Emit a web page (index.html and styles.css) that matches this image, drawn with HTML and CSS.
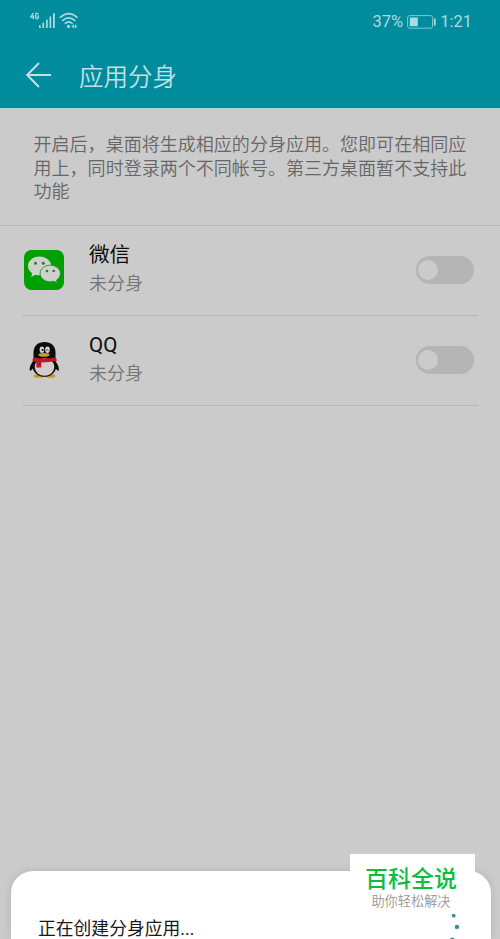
FILE: index.html
```html
<!DOCTYPE html>
<html lang="zh-CN">
<head>
<meta charset="UTF-8" />
<meta name="viewport" content="width=device-width, initial-scale=1" />
<title>应用分身</title>
<link rel="stylesheet" href="styles.css">
</head>
<body>
<div class="screen">
  <header>
    <div class="status-bar">
      <svg class="signal" width="50" height="20" viewBox="0 0 50 20" aria-hidden="true">
        <!-- 4G -->
        <path d="M3.2 1 L.8 5.2 H4.2 M3.4 3.2 V7.2 M8.3 2.4 Q8 1.2 6.9 1.2 Q5.7 1.2 5.7 2.7 V5.3 Q5.7 6.8 7 6.8 Q8.4 6.8 8.4 5.4 V4.2 H7.2" fill="none" stroke="currentColor" stroke-width="1.3"/>
        <path d="M9 13.2h1.7V16H9zM12.4 10.7h1.7V16h-1.7zM16 7.8h1.7V16H16zM19.5 4.6h1.7V16h-1.7zM23 1.2h1.8V16H23z" fill="currentColor"/>
        <!-- wifi -->
        <g fill="none" stroke="currentColor" stroke-width="1.7" stroke-linecap="round">
          <path d="M30.3 5.3 Q38.7 -2 47.1 5.3"/>
          <path d="M32.8 8.4 Q38.7 3.4 44.6 8.4"/>
          <path d="M35.3 11.3 Q38.7 8.5 42.1 11.3"/>
        </g>
        <circle cx="38.5" cy="14.4" r="1.6" fill="currentColor"/>
        <path d="M43.9 12.3v4.2l-2.5-2.1zM44.8 12.3v4.2l2.5-2.1z" fill="currentColor"/>
      </svg>
      <div class="status-right">
        <span>37%</span>
        <svg width="29" height="14" viewBox="0 0 29 14" aria-hidden="true">
          <rect x=".6" y=".6" width="25" height="12.6" rx="2" fill="none" stroke="currentColor" stroke-width="1" opacity=".75"/>
          <path d="M2.8 2.6h8v8.6h-8zM26.9 3.6h1.8v6.8h-1.8z" fill="currentColor"/>
        </svg>
        <span>1:21</span>
      </div>
    </div>
    <div class="title-bar">
      <svg width="26" height="26" viewBox="0 0 26 26" aria-hidden="true">
        <path d="M25 13H1.2M13 1L1.2 13L13 25" fill="none" stroke="currentColor" stroke-width="1.9"/>
      </svg>
      <h1>应用分身</h1>
    </div>
  </header>

  <p class="description">开启后，桌面将生成相应的分身应用。您即可在相同应用上，同时登录两个不同帐号。第三方桌面暂不支持此功能</p>

  <div class="app-list">
    <div class="app-row">
      <svg class="app-icon" width="42" height="42" viewBox="0 0 42 42" aria-hidden="true">
        <rect x="1" y="1" width="40" height="40" rx="7.5" fill="#00a000"/>
        <path d="M16.5 7.5C10 7.5 5 11.7 5 17c0 3 1.6 5.5 4.1 7.2L8.2 28l4.2-2.3c1.3.4 2.7.6 4.1.6 6.5 0 11.7-4.1 11.7-9.3S23 7.5 16.5 7.5z" fill="#cbd3cb"/>
        <path d="M27.3 16.2c-5.700 0-10.200 3.700-10.200 8.300s4.500 8.300 10.200 8.300c1.300 0 2.500-.2 3.600-.5l3.500 2-1-3.100c2.400-1.500 4-3.900 4-6.700 0-4.600-4.500-8.300-10.100-8.300z" fill="#cbd3cb" stroke="#24902a" stroke-width=".9"/>
        <g fill="#35743a">
          <circle cx="12.5" cy="14.3" r="1.5"/>
          <circle cx="20.3" cy="14.3" r="1.5"/>
          <circle cx="24" cy="22" r="1.3"/>
          <circle cx="30.7" cy="22" r="1.3"/>
        </g>
      </svg>
      <div class="app-text">
        <div class="app-name">微信</div>
        <div class="app-state">未分身</div>
      </div>
      <div class="switch"></div>
    </div>

    <div class="app-row">
      <svg class="app-icon" width="42" height="42" viewBox="0 0 42 42" aria-hidden="true">
        <ellipse cx="15.5" cy="37" rx="5" ry="1.800" fill="#c99a24"/>
        <ellipse cx="27.500" cy="37" rx="5" ry="1.800" fill="#c99a24"/>
        <path d="M12 20C9 23 6.200 28 6.700 31c.4 1.700 2.300-.2 3.600-2h22c1.300 1.800 3.200 3.700 3.600 2 .5-3-2.300-8-5.300-11z" fill="#0b0b0b"/>
        <ellipse cx="21.400" cy="27" rx="11.800" ry="10.800" fill="#0b0b0b"/>
        <path d="M10.500 21V13.500C10.500 7 15 3 21.500 3s11 4 11 10.500V21z" fill="#0b0b0b"/>
        <ellipse cx="21.500" cy="28" rx="9.800" ry="8.800" fill="#d1cdcd"/>
        <ellipse cx="18.900" cy="10.700" rx="2.300" ry="3.200" fill="#d3d3d3"/>
        <ellipse cx="24.500" cy="10.700" rx="2.300" ry="3.200" fill="#d3d3d3"/>
        <circle cx="19.600" cy="11" r="1.100" fill="#111"/>
        <path d="M23.500 11.600q.9-2 1.900 0" fill="none" stroke="#111" stroke-width=".9"/>
        <ellipse cx="21" cy="15.800" rx="5.700" ry="1.900" fill="#cf9d21"/>
        <path d="M10.200 18.200q11 2.800 22.600 0l1.200 3.600q-7.500 1.800-15.700 1.800V28.500h-4.900v-5.300l-4-1.500z" fill="#bd1825"/>
      </svg>
      <div class="app-text">
        <div class="app-name">QQ</div>
        <div class="app-state">未分身</div>
      </div>
      <div class="switch"></div>
    </div>
  </div>

  <div class="sheet">
    <span>正在创建分身应用...</span>
    <svg class="spinner" width="20" height="28" viewBox="0 0 20 28" aria-hidden="true">
      <g fill="#36918c">
        <circle cx="8.700" cy="3.700" r="1.900"/>
        <circle cx="11.900" cy="14.900" r="2.200"/>
        <circle cx="7.300" cy="28" r="2.500"/>
      </g>
    </svg>
  </div>

  <div class="watermark">
    <div class="watermark-title">百科全说</div>
    <div class="watermark-sub">助你轻松解决</div>
  </div>
</div>
</body>
</html>
```
FILE: styles.css
```css
body {
  margin: 0;
  font-family: Roboto, "Noto Sans CJK SC", sans-serif;
  background: #cbcbcb;
}

.screen {
  position: relative;
  height: 939px;
  display: flex;
  flex-direction: column;
  overflow: hidden;
}

/* Header */
header {
  height: 108px;
  box-sizing: border-box;
  background: #018c9e;
  color: #a9dce2;
  border-bottom: 1px solid #138494;
}

.status-bar {
  display: flex;
  justify-content: space-between;
  align-items: flex-start;
  height: 43px;
  padding: 12px 28px 0 30px;
  box-sizing: border-box;
}

.status-right {
  display: flex;
  align-items: center;
  gap: 4px;
  font-size: 16.5px;
  line-height: 20px;
}

.title-bar {
  display: flex;
  align-items: center;
  gap: 27px;
  height: 64px;
  padding-left: 26px;
  color: #c5e0e3;
}

h1 {
  margin: 0;
  padding-top: 5px;
  font-size: 24.5px;
  font-weight: 350;
  line-height: 36px;
}

.description {
  height: 118px;
  box-sizing: border-box;
  margin: 0;
  padding: 23px 30px 0 33.5px;
  border-top: 1px solid #b9d0d3;
  border-bottom: 1px solid #b5b5b5;
  font-family: "Noto Sans CJK SC", sans-serif;
  font-size: 18.05px;
  font-weight: 350;
  line-height: 23.7px;
  color: #666;
}

/* App list */
.app-list {
  flex-grow: 1;
  padding: 0 22px;
}

.app-row {
  display: flex;
  align-items: center;
  height: 90px;
  box-sizing: border-box;
  padding: 0 4px 1px 1px;
  border-bottom: 1px solid #b7b7b7;
}

.app-text {
  flex-grow: 1;
  margin-left: 24px;
  padding-bottom: 2px;
}

.app-name {
  font-size: 20.6px;
  line-height: 30px;
  color: #0c0c0c;
}

.app-state {
  font-size: 18px;
  font-weight: 350;
  line-height: 28px;
  color: #747474;
}

.switch {
  display: flex;
  align-items: center;
  width: 58px;
  height: 28px;
  box-sizing: border-box;
  padding-left: 2px;
  border-radius: 14px;
  background: #b5b5b5;
}

.switch::before {
  content: "";
  width: 20px;
  height: 20px;
  border-radius: 50%;
  background: #cbcbcb;
}

/* Bottom sheet */
.sheet {
  display: flex;
  justify-content: space-between;
  height: 68px;
  box-sizing: border-box;
  margin: 0 9px 0 11px;
  padding: 41px 26px 0 27px;
  border-radius: 22px 22px 0 0;
  background: #fff;
  box-shadow: 0 0 8px rgba(0, 0, 0, 0.12);
  font-size: 17.8px;
  line-height: 34px;
  color: #181818;
}

.spinner {
  flex-shrink: 0;
}

/* Watermark over the sheet */
.watermark {
  position: absolute;
  right: 25px;
  bottom: 29px;
  width: 125px;
  height: 56px;
  box-sizing: border-box;
  padding: 11px 3px 0 0;
  background: #fff;
  text-align: center;
}

.watermark-title {
  font-size: 23px;
  font-weight: 500;
  line-height: 30px;
  color: #0dbd3d;
}

.watermark-sub {
  font-size: 13.2px;
  font-weight: 350;
  line-height: 13px;
  color: #969696;
}
```
